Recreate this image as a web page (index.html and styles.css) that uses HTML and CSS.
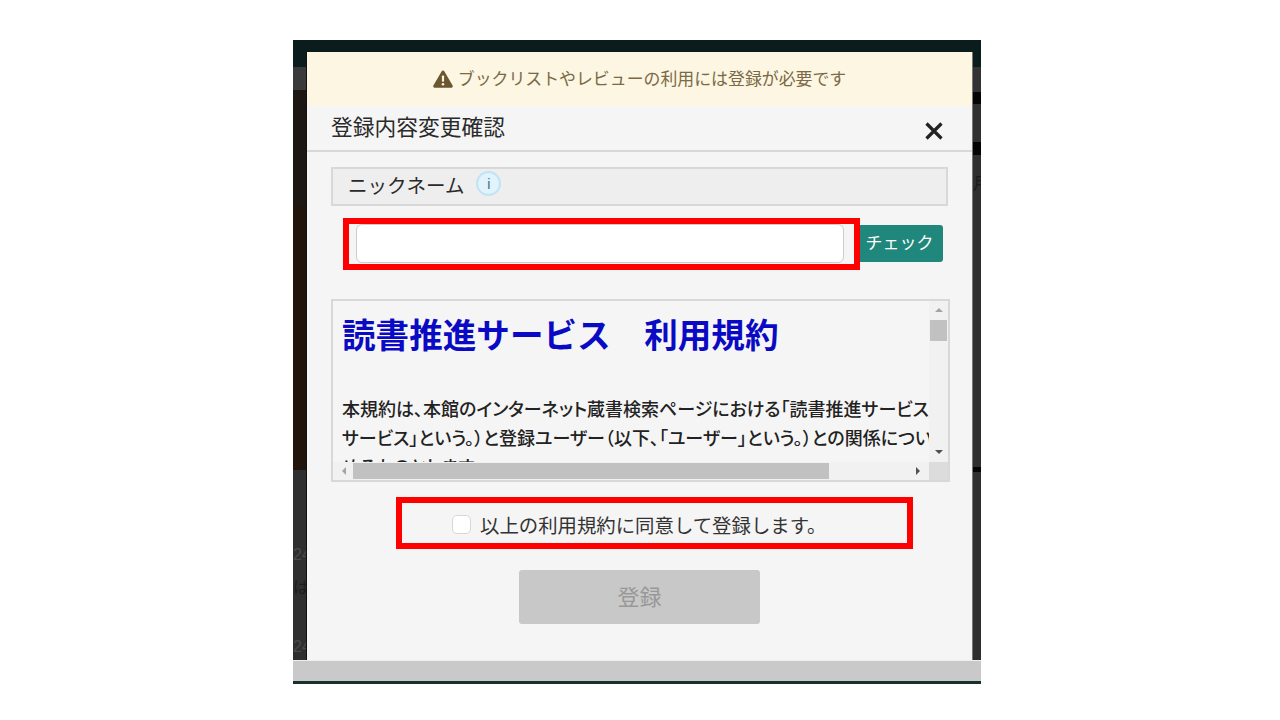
FILE: index.html
```html
<!DOCTYPE html>
<html lang="ja">
<head>
<meta charset="utf-8">
<title>登録内容変更確認</title>
<link rel="stylesheet" href="styles.css">
</head>
<body>
<div class="shot">
  <div class="topbar"></div>
  <div class="row">
    <div class="strip strip-left">
      <div class="seg s-teal"></div>
      <div class="seg s-grey"></div>
      <div class="seg s-dark"></div>
      <div class="seg s-brown"></div>
      <div class="seg s-list">
        <span class="frag f1">24</span>
        <span class="frag f2">はた</span>
        <span class="frag f3">24</span>
      </div>
    </div>
    <main class="modal">
      <div class="alert">
        <svg class="warn" viewBox="0 0 20 18" aria-hidden="true"><path d="M10 .5c.6 0 1 .3 1.300.8l8.300 14.300c.6 1-.1 2.100-1.200 2.100H1.600C.5 17.700-.2 16.600.4 15.600L8.700 1.300C9 .8 9.400.5 10 .5z" fill="#6b5730"/><rect x="8.900" y="5.400" width="2.200" height="6.400" rx=".8" fill="#fcf6e3"/><circle cx="10" cy="14.200" r="1.300" fill="#fcf6e3"/></svg>
        <span class="alert-text">ブックリストやレビューの利用には登録が必要です</span>
      </div>
      <header class="head">
        <h1 class="title">登録内容変更確認</h1>
        <svg class="close" viewBox="0 0 20 20" aria-hidden="true"><path d="M2.500 2.500l15 15M17.500 2.500l-15 15" stroke="#222" stroke-width="3.200" fill="none"/></svg>
      </header>
      <div class="body">
        <div class="field-label">
          <span class="lift">ニックネーム</span>
          <span class="info">i</span>
        </div>
        <div class="input-row">
          <div class="text-input"></div>
          <div class="check"><span class="lift">チェック</span></div>
          <div class="mark mark-input"></div>
        </div>
        <div class="terms">
          <div class="terms-view">
            <h2 class="terms-title">読書推進サービス　利用規約</h2>
            <p class="terms-line">本規約は、本館のインターネット蔵書検索ページにおける「読書推進サービス」（以下「読書推進</p>
            <p class="terms-line">サービス」という。）と登録ユーザー（以下、「ユーザー」という。）との関係について定めるものです</p>
            <p class="terms-line">めるものとします。</p>
          </div>
          <div class="vbar">
            <svg class="arrow" viewBox="0 0 10 6" aria-hidden="true"><path d="M5 1l4 4H1z" fill="#a3a3a3"/></svg>
            <div class="vthumb"></div>
            <svg class="arrow arrow-end" viewBox="0 0 10 6" aria-hidden="true"><path d="M1 1h8L5 5z" fill="#505050"/></svg>
          </div>
          <div class="hbar">
            <svg class="harrow" viewBox="0 0 6 10" aria-hidden="true"><path d="M5 1v8L1 5z" fill="#a3a3a3"/></svg>
            <div class="hthumb"></div>
            <svg class="harrow harrow-end" viewBox="0 0 6 10" aria-hidden="true"><path d="M1 1l4 4-4 4z" fill="#505050"/></svg>
          </div>
          <div class="corner"></div>
        </div>
        <div class="agree">
          <span class="box"></span>
          <span>以上の利用規約に同意して登録します。</span>
          <div class="mark mark-agree"></div>
        </div>
        <div class="submit-row"><div class="submit"><span class="lift">登録</span></div></div>
      </div>
    </main>
    <div class="strip strip-right">
      <div class="seg r-teal"></div>
      <div class="seg r-grey"></div>
      <div class="seg r-black"></div>
      <div class="seg r-grey2"></div>
      <div class="seg r-black2"></div>
      <div class="seg r-tall"><span class="frag r1">月</span></div>
      <div class="seg r-black3"></div>
      <div class="seg r-low"></div>
    </div>
  </div>
  <div class="bottombar"></div>
</div>
</body>
</html>
```

FILE: styles.css
```css
* { box-sizing: border-box; }
html, body { margin: 0; padding: 0; background: #fff; }
body {
  width: 1280px;
  height: 720px;
  overflow: hidden;
  padding: 40px 0 0 293px;
  font-family: "Liberation Sans", "Noto Sans CJK JP", sans-serif;
  color: #333;
}
.shot { width: 688px; height: 644px; display: flex; flex-direction: column; }
.topbar { height: 12px; background: #0a1c1c; flex: none; }
.row { height: 608px; display: flex; flex: none; }
.strip { display: flex; flex-direction: column; flex: none; overflow: hidden; }
.strip-left { width: 14px; border-right: 1px solid #111; }
.strip-right { width: 9px; border-left: 1px solid #777; }
.seg { flex: none; overflow: hidden; }
.s-teal { height: 15px; background: #0a1c1c; }
.s-grey { height: 23px; background: #3a3a3a; }
.s-dark { height: 116px; background: #1c1712; }
.s-brown { height: 264px; background: #21150b; }
.s-list { height: 190px; background: #2f2f2f; display: flex; flex-direction: column; color: #1c1c1c; font-size: 16px; line-height: 20px; white-space: nowrap; }
.f1 { margin-top: 75px; color: #4a4a4a; }
.f2 { margin-top: 13px; }
.f3 { margin-top: 39px; color: #4a4a4a; }
.r-teal { height: 15px; background: #0a1c1c; }
.r-grey { height: 25px; background: #333; }
.r-black { height: 12px; background: #050505; }
.r-grey2 { height: 38px; background: #303030; }
.r-black2 { height: 13px; background: #050505; }
.r-tall { height: 312px; background: #2f2f2f; color: #1a1a1a; font-size: 16px; line-height: 20px; }
.r1 { display: block; margin-top: 19px; }
.r-black3 { height: 5px; background: #050505; }
.r-low { height: 188px; background: #2f2f2f; }

.modal { width: 665px; flex: none; background: #f5f5f5; display: flex; flex-direction: column; }
.alert {
  height: 54px; flex: none; background: #fcf6e3; color: #7a6a45;
  display: flex; align-items: center; justify-content: center; gap: 5px;
  font-size: 16.900px;
}
.alert-text { position: relative; top: -2px; }
.lift { position: relative; top: -2px; }
.warn { width: 20px; height: 18px; flex: none; margin-top: -1px; }
.head {
  height: 46px; flex: none; border-bottom: 2px solid #d8d8d8;
  display: flex; align-items: flex-start; justify-content: space-between;
  padding: 8px 28px 0 24px;
}
.title { margin: 0; font-size: 21.750px; line-height: 28px; font-weight: 400; color: #2a2a2a; }
.close { width: 20px; height: 20px; margin-top: 7px; flex: none; }
.body { padding: 15px 22px 0 24px; display: flex; flex-direction: column; }
.field-label {
  width: 617px; height: 39px; background: #eee; border: 2px solid #d8d8d8;
  display: flex; align-items: center; gap: 11px; padding-left: 15px;
  font-size: 19.500px; color: #2a2a2a;
}
.info {
  width: 25px; height: 25px; border-radius: 50%; border: 2px solid #bfe3f7; background: #e3f3fc;
  color: #31708f; font-size: 14px; font-weight: 400; display: flex; align-items: center; justify-content: center;
  position: relative; top: -3px; left: 1px;
}
.input-row { position: relative; display: flex; align-items: center; margin-top: 18px; height: 39px; width: 612px; padding-left: 25px; }
.text-input { width: 488px; height: 39px; background: #fff; border: 1px solid #ccc; border-radius: 6px; flex: none; }
.check {
  margin-left: 16px; width: 83px; height: 37px; background: #20877c; color: #fff; border-radius: 0 3px 3px 0;
  font-size: 17px; display: flex; align-items: center; justify-content: center; padding-right: 4px; flex: none;
}
.mark { position: absolute; border: 6px solid #f00; }
.mark-input { left: 12px; top: -6px; width: 517px; height: 52px; }
.terms {
  margin-top: 36px; width: 619px; height: 183px; border: 2px solid #d8d8d8;
  display: grid; grid-template-columns: 1fr 19px; grid-template-rows: 1fr 18px;
}
.terms-view { overflow: hidden; padding: 0 0 0 9px; white-space: nowrap; color: #222; }
.terms-title { margin: 15px 0 38px; font-size: 33.600px; line-height: 42px; font-weight: 700; color: #0a0ac4; }
.terms-line { margin: 0; font-size: 18px; line-height: 29px; font-weight: 500; font-feature-settings: "palt"; }
.vbar { background: #f1f1f1; display: flex; flex-direction: column; align-items: center; padding-top: 6px; }
.arrow { width: 10px; height: 6px; flex: none; }
.vthumb { width: 17px; height: 21px; background: #c1c1c1; margin-top: 7px; flex: none; }
.arrow-end { margin-top: auto; margin-bottom: 7px; }
.hbar { background: #f1f1f1; display: flex; align-items: center; padding-left: 8px; }
.harrow { width: 6px; height: 10px; flex: none; }
.hthumb { width: 476px; height: 16px; background: #c1c1c1; margin-left: 6px; flex: none; }
.harrow-end { margin-left: auto; margin-right: 8px; }
.corner { background: #dcdcdc; }
.agree {
  position: relative; margin-top: 32px; height: 20px; display: flex; align-items: center; gap: 9px;
  padding-left: 121px; font-size: 19.400px; color: #333; white-space: nowrap;
}
.box { width: 19px; height: 19px; background: #fff; border: 1px solid #d8d8d8; border-radius: 5px; flex: none; }
.mark-agree { left: 65px; top: -17px; width: 517px; height: 52px; }
.submit-row { margin-top: 36px; padding-left: 188px; }
.submit {
  width: 241px; height: 54px; background: #c8c8c8; border-radius: 3px; color: #989898;
  font-size: 22px; display: flex; align-items: center; justify-content: center;
}
.bottombar {
  height: 24px; flex: none; background: #c9c9c9;
  border-top: 1px solid #eee; border-bottom: 3px solid #17312f;
}
```
